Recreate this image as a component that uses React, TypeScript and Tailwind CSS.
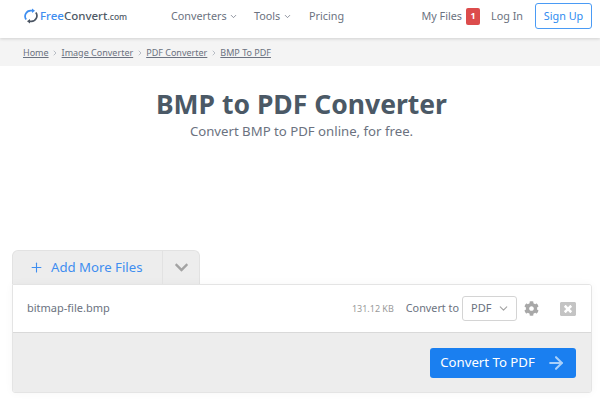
import { ChevronDown, ChevronRight, Plus, ArrowRight } from "lucide-react";
import { FaChevronDown, FaCog, FaWindowClose } from "react-icons/fa";

const crumbs = ["Home", "Image Converter", "PDF Converter", "BMP To PDF"];

function Logo() {
  return (
    <div className="flex items-center">
      <svg width="14" height="16" viewBox="0 0 14 16" fill="none" className="mr-[2px]">
        <path d="M2.2 11.5A5.6 5.6 0 0 1 7 2.6h1.6" stroke="#3f8ef0" strokeWidth="1.7" />
        <path d="M8 0.4 11 2.7 8 5z" fill="#3f8ef0" />
        <path d="M11.8 4.5A5.6 5.6 0 0 1 7 13.4H5.4" stroke="#4b5563" strokeWidth="1.7" />
        <path d="M6 11 3 13.3 6 15.6z" fill="#4b5563" />
      </svg>
      <span className="text-[11.5px] font-medium text-[#3f8ef0]">Free</span>
      <span className="text-[11.5px] font-medium text-[#4f5a66]">Convert</span>
      <span className="text-[8.5px] font-medium text-[#4f5a66] mt-[2px]">.com</span>
    </div>
  );
}

export default function App() {
  return (
    <div className="w-[600px] h-[401px] overflow-hidden bg-white font-['Noto_Sans','Open_Sans',sans-serif]">
      <header className="h-[38px] flex items-center pl-6 pr-2 pb-[6px] bg-white shadow-[0_1px_3px_rgba(0,0,0,0.15)] relative">
        <div className="w-[147px]">
          <Logo />
        </div>
        <nav className="flex items-center text-[10.8px] text-[#6b7280]">
          <span className="flex items-center w-[83px]">
            Converters <ChevronDown size={9} className="ml-[2px]" />
          </span>
          <span className="flex items-center w-[55px]">
            Tools <ChevronDown size={9} className="ml-[3px]" />
          </span>
          <span>Pricing</span>
        </nav>
        <div className="ml-auto flex items-center text-[10.8px] text-[#6b7280]">
          <span>My Files</span>
          <span className="ml-[4px] w-[14px] h-[17px] rounded-[2px] bg-[#dc4c4c] text-white text-[9px] font-bold flex items-center justify-center">
            1
          </span>
          <span className="ml-[11px]">Log In</span>
          <span className="ml-[12px] w-[57px] h-[26px] rounded-[3px] border border-[#4a9bf5] text-[#2e8bf0] flex items-center justify-center">
            Sign Up
          </span>
        </div>
      </header>

      <div className="h-[28px] bg-[#f4f4f4] flex items-center pl-[23px] pt-[1px] text-[9px] text-[#6b7280]">
        {crumbs.map((c, i) => (
          <span key={c} className="flex items-center">
            {i > 0 && <ChevronRight size={8} className="mx-[2.5px] text-[#9ca3af]" />}
            <span className="underline">{c}</span>
          </span>
        ))}
      </div>

      <div className="flex flex-col items-center pt-[19px] pl-[3px]">
        <h1 className="text-[26.5px] leading-[38px] font-bold text-[#4b5966]">BMP to PDF Converter</h1>
        <p className="text-[13.2px] leading-[17px] text-[#6b7280]">Convert BMP to PDF online, for free.</p>
      </div>

      <div className="mt-[110px] ml-3 w-[580px]">
        <div className="flex w-[188px] h-[34px] bg-[#ededed] border border-b-0 border-[#e2e2e2] rounded-t-[6px]">
          <div className="w-[150px] flex items-center pl-4 text-[#3f8ef0] border-r border-[#e2e2e2]">
            <Plus size={15} strokeWidth={1.75} />
            <span className="ml-[7px] text-[13.2px]">Add More Files</span>
          </div>
          <div className="flex-1 flex items-center justify-center text-[#a3a3a3]">
            <FaChevronDown size={15} />
          </div>
        </div>
        <div className="border border-[#e4e4e4] rounded-b-[3px] rounded-tr-[3px] overflow-hidden shadow-[0_0_8px_rgba(0,0,0,0.04)]">
          <div className="h-[48px] bg-white border-b border-[#d9d9d9] flex items-center pl-[14px] pr-[15px]">
            <span className="text-[11px] text-[#6b7280]">bitmap-file.bmp</span>
            <span className="ml-auto text-[9px] text-[#9a9a9a]">131.12 KB</span>
            <span className="ml-[12px] text-[10.8px] text-[#6b7280]">Convert to</span>
            <div className="ml-[3px] w-[55px] h-[25px] border border-[#d4d4d4] rounded-[3px] flex items-center pl-[8px] text-[11px] text-[#6b7280]">
              PDF
              <ChevronDown size={13} className="ml-[6px] text-[#a3a3a3]" />
            </div>
            <FaCog size={15} className="ml-[7px] text-[#a8a8a8]" />
            <FaWindowClose size={16} className="ml-[21px] text-[#c4c4c4]" />
          </div>
          <div className="h-[59px] bg-[#ededed] flex items-center justify-end pr-[15px]">
            <div className="w-[146px] h-[30px] rounded-[3px] bg-[#1a7ff0] flex items-center justify-center text-white text-[13.2px]">
              Convert To PDF
              <ArrowRight size={20} strokeWidth={2.5} className="ml-[11px] text-[#a9d0fa]" />
            </div>
          </div>
        </div>
      </div>
    </div>
  );
}
